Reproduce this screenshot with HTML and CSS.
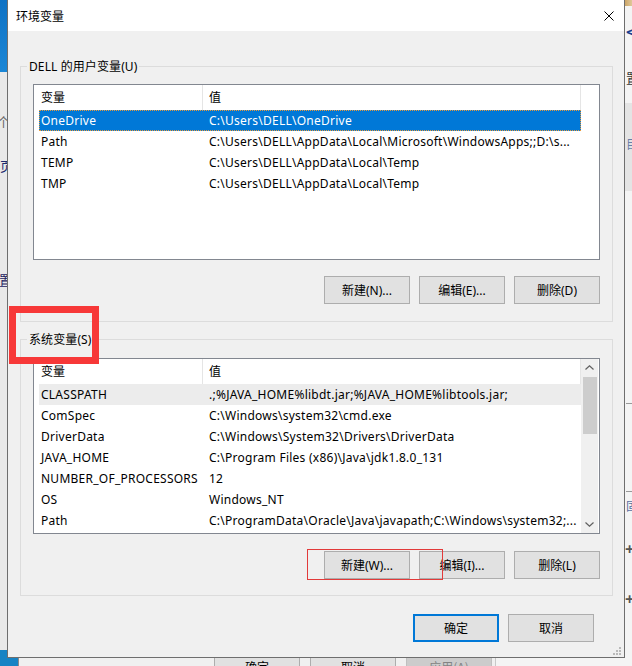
FILE: index.html
```html
<!DOCTYPE html>
<html lang="zh-CN">
<head>
<meta charset="utf-8">
<title>环境变量</title>
<link rel="stylesheet" href="styles.css">
</head>
<body>
<div class="desktop">
  <div class="bg-left">
    <div class="bg-left-accent"></div>
    <span class="frag frag-l1">个</span>
    <span class="frag frag-l2">页</span>
    <span class="frag frag-l3">置</span>
  </div>
  <div class="bg-right">
    <div class="bg-right-top"></div>
    <span class="frag frag-r1">&lt;</span>
    <span class="frag frag-r2">置</span>
    <div class="bg-right-band"><span class="frag-r3">目</span></div>
    <div class="bg-right-lines">
      <div class="dash"></div>
      <div class="dash dash2"></div>
      <span class="frag-r4">固</span>
      <span class="frag-r5">+</span>
      <span class="frag-r6">+</span>
    </div>
  </div>
  <div class="bg-bottom">
    <div class="bg-bottom-accent"></div>
    <div class="bg-win">
      <span class="bbtn">确定</span>
      <span class="bbtn">取消</span>
      <span class="bbtn bbtn-dis">应用(A)</span>
    </div>
  </div>

  <div class="dialog">
    <div class="titlebar">
      <span class="title">环境变量</span>
      <span class="close">
        <svg width="10" height="10" viewBox="0 0 10 10"><path d="M0.5 0.5 L9.5 9.5 M9.5 0.5 L0.5 9.5" stroke="#000" stroke-width="1" fill="none"/></svg>
      </span>
    </div>
    <div class="dlg-body">
      <div class="group group-user">
        <div class="legend">DELL 的用户变量(U)</div>
        <div class="list">
          <div class="list-main">
            <div class="list-header">
              <div class="h1">变量</div>
              <div class="h2">值</div>
            </div>
            <div class="row selected"><div class="c1">OneDrive</div><div class="c2">C:\Users\DELL\OneDrive</div></div>
            <div class="row"><div class="c1">Path</div><div class="c2">C:\Users\DELL\AppData\Local\Microsoft\WindowsApps;;D:\s...</div></div>
            <div class="row"><div class="c1">TEMP</div><div class="c2">C:\Users\DELL\AppData\Local\Temp</div></div>
            <div class="row"><div class="c1">TMP</div><div class="c2">C:\Users\DELL\AppData\Local\Temp</div></div>
          </div>
        </div>
        <div class="btn-row">
          <button class="btn">新建(N)...</button>
          <button class="btn">编辑(E)...</button>
          <button class="btn">删除(D)</button>
        </div>
      </div>

      <div class="group group-sys">
        <div class="legend">系统变量(S)</div>
        <div class="list list-scroll">
          <div class="list-main">
            <div class="list-header">
              <div class="h1">变量</div>
              <div class="h2">值</div>
            </div>
            <div class="row inactive"><div class="c1">CLASSPATH</div><div class="c2">.;%JAVA_HOME%libdt.jar;%JAVA_HOME%libtools.jar;</div></div>
            <div class="row"><div class="c1">ComSpec</div><div class="c2">C:\Windows\system32\cmd.exe</div></div>
            <div class="row"><div class="c1">DriverData</div><div class="c2">C:\Windows\System32\Drivers\DriverData</div></div>
            <div class="row"><div class="c1">JAVA_HOME</div><div class="c2">C:\Program Files (x86)\Java\jdk1.8.0_131</div></div>
            <div class="row"><div class="c1">NUMBER_OF_PROCESSORS</div><div class="c2">12</div></div>
            <div class="row"><div class="c1">OS</div><div class="c2">Windows_NT</div></div>
            <div class="row"><div class="c1">Path</div><div class="c2">C:\ProgramData\Oracle\Java\javapath;C:\Windows\system32;...</div></div>
          </div>
          <div class="scrollbar">
            <div class="sb-arrow">
              <svg width="9" height="5" viewBox="0 0 9 5"><path d="M0.5 4.5 L4.5 0.8 L8.5 4.5" stroke="#606060" stroke-width="1.2" fill="none"/></svg>
            </div>
            <div class="sb-track"><div class="sb-thumb"></div></div>
            <div class="sb-arrow">
              <svg width="9" height="5" viewBox="0 0 9 5"><path d="M0.5 0.5 L4.5 4.2 L8.5 0.5" stroke="#606060" stroke-width="1.2" fill="none"/></svg>
            </div>
          </div>
        </div>
        <div class="btn-row">
          <button class="btn">新建(W)...</button>
          <button class="btn">编辑(I)...</button>
          <button class="btn">删除(L)</button>
        </div>
      </div>

      <div class="dlg-btns">
        <button class="btn btn-default">确定</button>
        <button class="btn">取消</button>
      </div>
    </div>
    <svg class="grip" width="9" height="9" viewBox="0 0 9 9">
      <rect x="7" y="1" width="2" height="2" fill="#b9b9b9"/>
      <rect x="4" y="4" width="2" height="2" fill="#b9b9b9"/>
      <rect x="7" y="4" width="2" height="2" fill="#b9b9b9"/>
      <rect x="1" y="7" width="2" height="2" fill="#b9b9b9"/>
      <rect x="4" y="7" width="2" height="2" fill="#b9b9b9"/>
      <rect x="7" y="7" width="2" height="2" fill="#b9b9b9"/>
    </svg>
  </div>

  <div class="mark mark-thick"></div>
  <div class="mark mark-thin"></div>
</div>
</body>
</html>
```
FILE: styles.css
```css
* { box-sizing: border-box; }
html, body { margin: 0; padding: 0; }
body {
  width: 632px;
  height: 666px;
  overflow: hidden;
  background: #f2f2f2;
  font-family: "Noto Sans", "Noto Sans CJK SC", sans-serif;
  font-size: 12px;
  color: #000;
}
.desktop { position: relative; width: 632px; height: 666px; overflow: hidden; }

/* background windows */
.bg-left { position: absolute; left: 0; top: 0; width: 8px; height: 658px; background: #e9e9e9; border-right: 1px solid #fafafa; }
.bg-left-accent { height: 72px; background: linear-gradient(#0f72c4, #1a86d6); }
.frag { position: absolute; font-family: "Noto Sans CJK SC", sans-serif; font-size: 13px; line-height: 16px; }
.frag-l1 { left: -3px; top: 114px; color: #6a6a6a; }
.frag-l2 { left: 0; top: 158px; color: #1c2a6e; }
.frag-l3 { left: -1px; top: 272px; color: #1c2060; }

.bg-right { position: absolute; left: 624px; top: 0; width: 8px; height: 658px; background: #f4f4f4; }
.bg-right-top { height: 6px; background: linear-gradient(90deg, #c8a060, #e0c89a); }
.frag-r1 { left: 2px; top: 24px; color: #1b3f8f; font-weight: bold; font-size: 15px; }
.frag-r2 { left: 2px; top: 70px; color: #333; }
.bg-right-band { position: absolute; left: 0; top: 103px; width: 8px; height: 88px; background: #e4e4e4; }
.frag-r3 { position: absolute; left: 2px; top: 32px; font-size: 12px; color: #6a7ea8; font-family: "Noto Sans CJK SC", sans-serif; }
.bg-right-lines { position: absolute; left: 0; top: 395px; width: 8px; height: 230px; }
.dash { position: absolute; left: 2px; top: 8px; width: 6px; border-top: 1px dashed #999; }
.dash2 { top: 96px; }
.frag-r4 { position: absolute; left: 2px; top: 102px; font-size: 12px; color: #5a6ea0; font-family: "Noto Sans CJK SC", sans-serif; }
.frag-r5 { position: absolute; left: 1px; top: 143px; font-size: 16px; font-weight: bold; color: #555; }
.frag-r6 { position: absolute; left: 1px; top: 193px; font-size: 16px; font-weight: bold; color: #555; }

.bg-bottom { position: absolute; left: 0; top: 650px; width: 632px; height: 16px; background: #f4f4f4; display: flex; }
.bg-bottom-accent { width: 18px; background: #1783c4; }
.bg-win { width: 478px; background: #f0f0f0; border-left: 1px solid #8a8a8a; border-right: 1px solid #c8c8c8; display: flex; gap: 10px; padding: 2px 0 0 195px; }
.bbtn { flex: none; width: 86px; height: 28px; border: 1px solid #adadad; background: #e1e1e1; display: flex; align-items: center; justify-content: center; font-family: "Noto Sans CJK SC", sans-serif; }
.bbtn-dis { background: #cccccc; border-color: #bfbfbf; color: #838383; }

/* dialog */
.dialog {
  position: absolute;
  left: 7px;
  top: 0;
  width: 618px;
  height: 658px;
  background: #f0f0f0;
  border: 1px solid #6e6e6e;
  border-top: none;
  z-index: 2;
}
.titlebar { height: 31px; background: #fff; display: flex; align-items: center; justify-content: space-between; padding-left: 8px; }
.title { font-family: "Noto Sans CJK SC", sans-serif; font-size: 12px; }
.close { width: 30px; height: 31px; display: flex; align-items: center; justify-content: center; }
.close svg { display: block; }

.dlg-body { padding-left: 12px; }
.group { width: 593px; border: 1px solid #dcdcdc; padding: 0 12px 17px 12px; }
.group-user { margin-top: 35px; }
.group-sys { margin-top: 17px; padding-bottom: 16px; }
.legend {
  width: fit-content;
  height: 17px;
  line-height: 17px;
  margin: -9px 0 0 -6px;
  padding: 0 2px;
  background: #f0f0f0;
  white-space: nowrap;
  letter-spacing: 0.1px;
}

.list { width: 567px; height: 176px; border: 1px solid #828790; background: #fff; margin-top: 9px; display: flex; overflow: hidden; }
.group-sys .list { margin-top: 10px; }
.list-main { width: 547px; }
.list-header { height: 25px; display: flex; }
.h1, .h2 { height: 25px; line-height: 25px; border-right: 1px solid #e5e5e5; white-space: nowrap; }
.h1 { width: 169px; padding-left: 7px; }
.h2 { width: 378px; padding-left: 6px; }

.row { height: 21px; line-height: 21px; margin-left: 5px; width: 542px; display: flex; white-space: nowrap; letter-spacing: 0.25px; }
.c1 { width: 168px; padding-left: 2px; overflow: hidden; }
.c2 { flex: 1; padding-left: 2px; overflow: hidden; }
.row.selected { background: #0078d7; color: #fff; outline: 1px dotted #e89a3c; outline-offset: -1px; }
.row.inactive { background: #ececec; }

.scrollbar { width: 17px; background: #f0f0f0; display: flex; flex-direction: column; }
.sb-arrow { height: 17px; display: flex; align-items: center; justify-content: center; }
.sb-arrow svg { display: block; }
.sb-track { flex: 1; padding: 1px 1px 0 2px; }
.sb-thumb { height: 57px; background: #cdcdcd; }

.btn-row { display: flex; justify-content: flex-end; gap: 9px; margin-top: 16px; }
.group-sys .btn-row { margin-top: 17px; }
.btn {
  width: 86px;
  height: 28px;
  padding: 0;
  margin: 0;
  border: 1px solid #adadad;
  background: #e1e1e1;
  font-family: "Noto Sans", "Noto Sans CJK SC", sans-serif;
  font-size: 12px;
  color: #000;
  white-space: nowrap;
}
.btn-default { border: 2px solid #0078d7; }
.dlg-btns { display: flex; justify-content: flex-end; gap: 9px; margin-top: 18px; padding-right: 30px; }

.grip { position: absolute; right: 3px; bottom: 2px; display: block; }

/* annotations */
.mark { position: absolute; z-index: 3; }
.mark-thick { left: 9px; top: 306px; width: 90px; height: 58px; border: 7px solid #f73838; }
.mark-thin { left: 307px; top: 549px; width: 136px; height: 31px; border: 1px solid #e23a3a; }
```
